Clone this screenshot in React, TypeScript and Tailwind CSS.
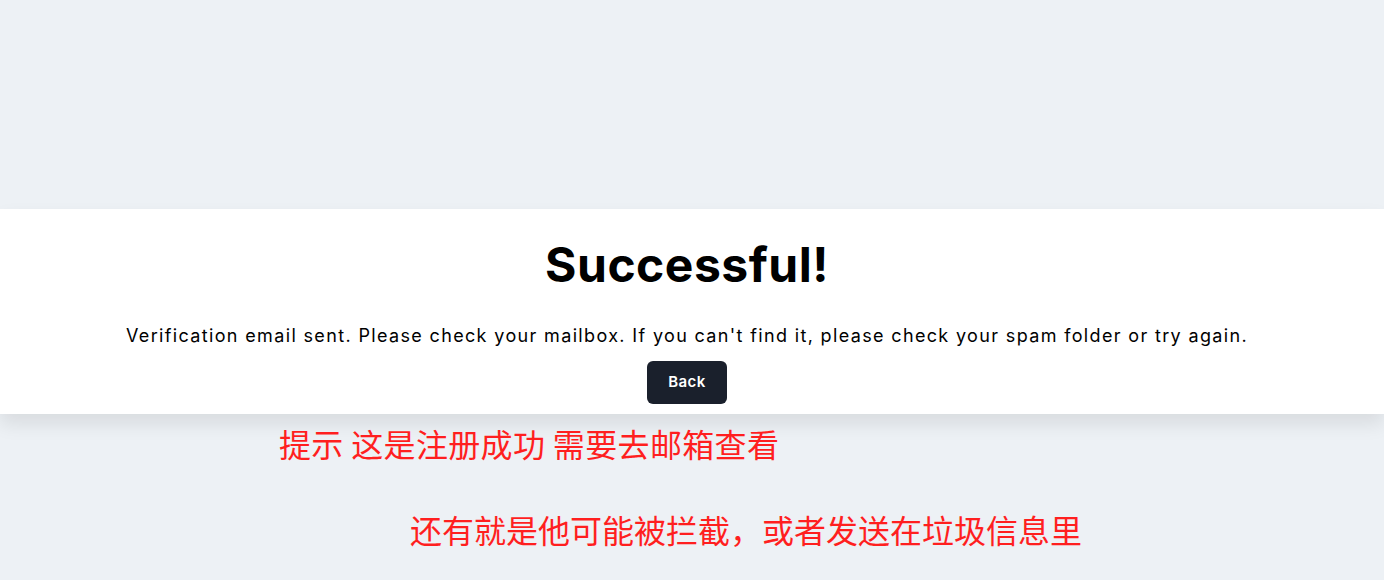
export default function App() {
  return (
    <div className="min-h-[580px] bg-[#edf1f5] pt-[209px] font-['Inter','Noto_Sans_CJK_SC',sans-serif]">
      <div className="bg-white pt-[28px] pb-[10px] pr-[10px] flex flex-col items-center shadow-[0_10px_18px_rgba(0,0,0,0.09)]">
        <h1 className="text-[48px] leading-[56px] font-bold text-black tracking-[0.5px]">Successful!</h1>
        <p className="mt-[29px] text-[18px] leading-[28px] text-black tracking-[1.35px]">
          Verification email sent. Please check your mailbox. If you can't find it, please check your spam folder or try again.
        </p>
        <button className="mt-[11px] h-[43px] w-[80px] rounded-md bg-[#1a202c] text-white text-[15px] font-semibold tracking-[0.4px]">
          Back
        </button>
      </div>
      <div className="font-['Noto_Sans_CJK_SC',sans-serif] text-[32px] text-[#ff1f1f] leading-[44px]">
        <p className="ml-[279px] mt-[7px] tracking-[0.35px]">提示 这是注册成功 需要去邮箱查看</p>
        <p className="ml-[410px] mt-[42px]">还有就是他可能被拦截，或者发送在垃圾信息里</p>
      </div>
    </div>
  );
}
